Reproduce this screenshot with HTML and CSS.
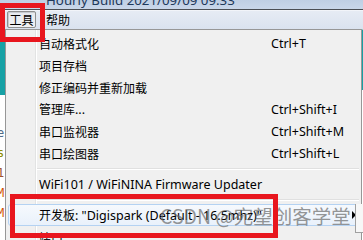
FILE: index.html
```html
<!DOCTYPE html>
<html lang="zh-CN">
<head>
    <meta charset="UTF-8">
    <meta name="viewport" content="width=device-width, initial-scale=1.0">
    <title>工具菜单</title>
    <link rel="stylesheet" href="styles.css">
</head>
<body>
    <div class="screen">
        <div class="titlebar"><span class="title">Hourly Build 2021/09/09 09:33</span></div>
        <div class="menubar">
            <span class="menu-title open">工具</span>
            <span class="menu-title">帮助</span>
        </div>
        <div class="workarea">
            <div class="edge-left">
                <span class="frag plain">e</span>
                <span class="frag olive">s</span>
                <span class="frag brown">1</span>
                <span class="frag orange">M</span>
                <span class="frag orange">M</span>
            </div>
            <div class="menu">
                <div class="item"><span class="zh">自动格式化</span><span>Ctrl+T</span></div>
                <div class="item"><span class="zh">项目存档</span></div>
                <div class="item"><span class="zh">修正编码并重新加载</span></div>
                <div class="item"><span><span class="zh">管理库</span>...</span><span>Ctrl+Shift+I</span></div>
                <div class="item"><span class="zh">串口监视器</span><span>Ctrl+Shift+M</span></div>
                <div class="item"><span class="zh">串口绘图器</span><span>Ctrl+Shift+L</span></div>
                <div class="separator"></div>
                <div class="item"><span>WiFi101 / WiFiNINA Firmware Updater</span></div>
                <div class="separator"></div>
                <div class="item hover"><span><span class="zh">开发板</span>: "Digispark (Default - 16.5mhz)"</span><span></span><span class="arrow"></span></div>
                <div class="item"><span class="zh">端口</span></div>
            </div>
            <div class="edge-right"></div>
        </div>

        <div class="submenu-edge"></div>
        <div class="watermark">CSDN @宛望创客学堂</div>
        <div class="mark mark-menu"></div>
        <div class="mark mark-board"></div>
    </div>
</body>
</html>
```
FILE: styles.css
```css
body{
    margin: 0;
    background: #fff;
}
.screen{
    position: relative;
    width: 363px;
    height: 240px;
    overflow: hidden;
    font-family: "Noto Sans", "Noto Sans CJK SC", sans-serif;
    color: #000;
}
.titlebar{
    height: 9px;
    overflow: hidden;
    background: linear-gradient(to bottom, #bfcfe4, #c9d7ea);
    padding-left: 46px;
}
.title{
    display: block;
    margin-top: -7px;
    font-size: 13.3px;
    line-height: 14px;
    color: #1e395b;
    white-space: nowrap;
}
.menubar{
    height: 19px;
    border-top: 1px solid #4b4f55;
    background: linear-gradient(to bottom, #fdfdfe 0, #e6ebf4 1px, #dae2ef);
    display: flex;
    align-items: center;
    gap: 10px;
    padding-left: 7px;
}
.menu-title{
    font-family: "Noto Sans CJK SC", sans-serif;
    font-size: 12px;
    line-height: 15px;
}
.menu-title.open{
    width: 27px;
    text-align: center;
    border: 1px solid #8e8f8f;
    border-radius: 2px;
    background: linear-gradient(to bottom, #e6e9ee, #f1f2f4);
    box-shadow: inset 1px 1px 0 #c8cbd0;
}
.workarea{
    display: flex;
    height: 211px;
}
.edge-left{
    width: 5px;
    overflow: hidden;
    background: linear-gradient(to bottom, #17a1a5 0, #17a1a5 66px, #fff 66px);
    padding-top: 94px;
    display: flex;
    flex-direction: column;
    font-family: "DejaVu Sans Mono", monospace;
    font-size: 12px;
    line-height: 20px;
}
.frag{
    margin-left: -3px;
}
.plain{ color: #4f6a86; }
.olive{ color: #8c8c00; }
.brown{ color: #a0522d; }
.orange{ color: #d35400; }
.menu{
    width: 357px;
    box-sizing: border-box;
    border: 1px solid #979797;
    border-bottom: 0;
    padding: 2px 2px 0;
    background:
        linear-gradient(to right, transparent 29px, #e2e3e3 29px, #e2e3e3 30px, #fff 30px, #fff 31px, transparent 31px),
        #f0f0f0;
    font-size: 12.5px;
    overflow: hidden;
}
.edge-right{
    width: 1px;
    background: linear-gradient(to bottom, #fff 0, #17a1a5 1px, #17a1a5 61px, #fff 61px);
}
.item{
    height: 22px;
    box-sizing: border-box;
    border: 1px solid transparent;
    border-radius: 3px;
    display: grid;
    grid-template-columns: 232px 1fr auto;
    align-items: center;
    padding-left: 30px;
    white-space: nowrap;
}
.zh{
    font-family: "Noto Sans CJK SC", sans-serif;
    font-size: 12px;
}
.item.hover{
    border-color: #b4d2f2;
    background: linear-gradient(to bottom, #f6f9fd, #e9f1fb);
}
.arrow{
    width: 0;
    height: 0;
    border-left: 4px solid #000;
    border-top: 4px solid transparent;
    border-bottom: 4px solid transparent;
    margin-right: 2px;
}
.separator{
    margin: 4px 0 3px 29px;
    border-top: 1px solid #e0e0e0;
    border-bottom: 1px solid #fff;
}
.submenu-edge{
    position: absolute;
    left: 355px;
    top: 204px;
    width: 7px;
    height: 28px;
    border-left: 1px solid #a0a0a0;
    border-bottom: 1px solid #a0a0a0;
    background: #f7f7f7;
}
.watermark{
    position: absolute;
    left: 160px;
    top: 202px;
    font-family: "Noto Sans CJK SC", sans-serif;
    font-size: 19.5px;
    line-height: 28px;
    color: rgba(105, 105, 105, 0.7);
    white-space: nowrap;
}
.mark{
    position: absolute;
    box-sizing: border-box;
    border: 5px solid #e8161e;
}
.mark-menu{
    left: 0;
    top: 3px;
    width: 45px;
    height: 39px;
}
.mark-board{
    left: 10px;
    top: 194px;
    width: 268px;
    height: 44px;
}
```
